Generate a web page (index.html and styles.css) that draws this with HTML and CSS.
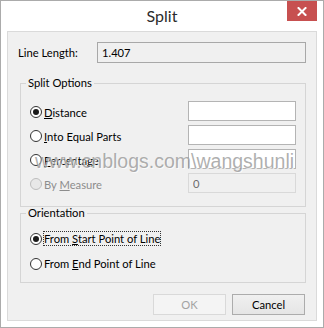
FILE: index.html
```html
<!DOCTYPE html>
<html lang="en">
<head>
    <meta charset="UTF-8">
    <title>Split</title>
    <link rel="stylesheet" href="styles.css">
</head>
<body>
<div class="window">
    <div class="titlebar">
        <span class="title">Split</span>
        <button class="close-btn" type="button">
            <svg width="10" height="9" viewBox="0 0 10 9">
                <path d="M1.5 1 L8.5 8 M8.5 1 L1.5 8" stroke="#fff" stroke-width="2" stroke-linecap="square"/>
            </svg>
        </button>
    </div>
    <div class="panel">
        <div class="length-row">
            <label class="length-title">Line Length:</label>
            <input class="field field-readonly" value="1.407" readonly/>
        </div>
        <fieldset class="group">
            <legend>Split Options</legend>
            <div class="option-grid">
                <label class="radio"><span class="dot checked"></span><span class="text"><u>D</u>istance</span></label>
                <input class="field"/>
                <label class="radio"><span class="dot"></span><span class="text"><u>I</u>nto Equal Parts</span></label>
                <input class="field"/>
                <label class="radio"><span class="dot"></span><span class="text"><u>P</u>ercentage</span></label>
                <input class="field"/>
                <label class="radio disabled"><span class="dot"></span><span class="text">By <u>M</u>easure</span></label>
                <input class="field field-disabled" value="0" disabled/>
            </div>
        </fieldset>
        <fieldset class="group orientation">
            <legend>Orientation</legend>
            <label class="radio"><span class="dot checked"></span><span class="text focus">From <u>S</u>tart Point of Line</span></label>
            <label class="radio"><span class="dot"></span><span class="text">From <u>E</u>nd Point of Line</span></label>
        </fieldset>
        <div class="button-group">
            <button class="btn" type="button" disabled>OK</button>
            <button class="btn" type="button">Cancel</button>
        </div>
    </div>
    <div class="watermark">www.cnblogs.com\wangshunli</div>
</div>
</body>
</html>
```

FILE: styles.css
```css
body {
    margin: 0;
    background: #fff;
}

.window {
    position: relative;
    width: 324px;
    height: 328px;
    box-sizing: border-box;
    border: 1px solid #ababab;
    padding: 0 6px 6px;
    background: #fff;
    font: 11.2px Lato, "Liberation Sans", sans-serif;
    color: #000;
}

.titlebar {
    position: relative;
    height: 30px;
    text-align: center;
}

.title {
    font-size: 16px;
    line-height: 30px;
    color: #2b2b2b;
}

.close-btn {
    position: absolute;
    top: 0;
    right: 0;
    width: 30px;
    height: 20px;
    padding: 0;
    border: none;
    background: #c75050;
    display: flex;
    align-items: center;
    justify-content: center;
}

.panel {
    height: 290px;
    box-sizing: border-box;
    border: 1px solid #dadada;
    background: #f0f0f0;
    padding: 10px 10px 0;
}

.length-row {
    display: flex;
    align-items: center;
    height: 21px;
}

.length-title {
    width: 79px;
}

.field {
    box-sizing: border-box;
    height: 20px;
    margin: 0;
    padding: 0 4px;
    border: 1px solid #b4b4b4;
    background: #fff;
    font: 11.2px Lato, "Liberation Sans", sans-serif;
    color: #000;
}

.field-readonly {
    width: 209px;
    height: 21px;
    background: #f0f0f0;
    border-color: #a8a8a8;
}

.field-disabled {
    background: #f0f0f0;
    border-color: #d9d9d9;
    color: #6d6d6d;
}

.group {
    margin: 13px 0 0 2px;
    padding: 11px 9px 13px;
    border: 1px solid #d5d5d5;
}

.group legend {
    margin-left: -4px;
    padding: 0 2px;
    line-height: 14px;
}

.option-grid {
    display: grid;
    grid-template-columns: 1fr 108px;
    grid-auto-rows: 20px;
    row-gap: 4px;
}

.orientation {
    margin-top: -1px;
    padding: 5px 9px 7px;
}

.orientation .radio {
    height: 23px;
}

.radio {
    display: flex;
    align-items: center;
    padding-top: 2px;
}

.dot {
    position: relative;
    width: 12px;
    height: 12px;
    box-sizing: border-box;
    border: 1px solid #333;
    border-radius: 50%;
    background: #fff;
    margin-right: 1px;
    flex: none;
}

.dot.checked::after {
    content: "";
    position: absolute;
    left: 2px;
    top: 2px;
    width: 6px;
    height: 6px;
    border-radius: 50%;
    background: #1a1a1a;
}

.text {
    border: 1px dotted transparent;
    line-height: 13px;
}

.text.focus {
    border-color: #333;
}

.disabled {
    color: #8d8d8d;
}

.disabled .dot {
    border-color: #bdbdbd;
    background: #e8e8e8;
}

.button-group {
    display: flex;
    justify-content: flex-end;
    gap: 6px;
    margin: 11px 1px 0 0;
}

.btn {
    width: 73px;
    height: 21px;
    padding: 0;
    border: 1px solid #acacac;
    background: linear-gradient(#f0f0f0, #e5e5e5);
    font: 11.2px Lato, "Liberation Sans", sans-serif;
    color: #000;
}

.btn:disabled {
    border-color: #d9d9d9;
    background: #f4f4f4;
    color: #a3a3a3;
}

.watermark {
    position: absolute;
    left: 34px;
    top: 150px;
    font: 19.5px/20px "Liberation Sans", sans-serif;
    color: rgba(140, 140, 140, 0.7);
    text-shadow: 1px 1px 0 rgba(255, 255, 255, 0.7);
    pointer-events: none;
}
```
